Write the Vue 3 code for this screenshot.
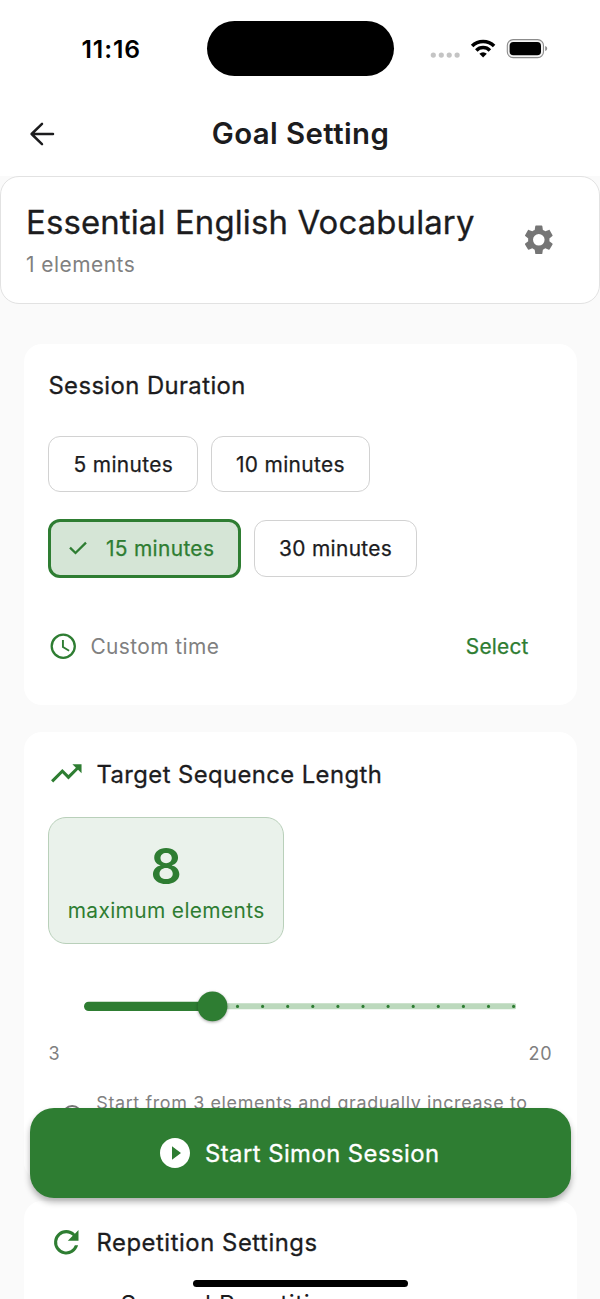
<script setup>
import { ref } from 'vue'

const durations = [[5, 10], [15, 30]]
const selected = ref(15)

const min = 3
const max = 20
const value = ref(8)
const step = 25.1
const ticks = Array.from({ length: max - value.value }, (_, i) => 153.5 + i * step)
</script>

<template>
  <main class="screen">
    <header class="status">
      <span class="time">11:16</span>
      <span class="island"></span>
      <svg class="indicators" width="118" height="24" viewBox="0 0 118 24">
        <g fill="#c4c4c4">
          <circle cx="3.3" cy="18.1" r="2.6" />
          <circle cx="11.3" cy="18.1" r="2.6" />
          <circle cx="19.2" cy="18.1" r="2.6" />
          <circle cx="27.1" cy="18.1" r="2.6" />
        </g>
        <g fill="none" stroke="#000" stroke-width="3.5">
          <path d="M42.1 9.1a15.6 15.6 0 0 1 22 0" />
          <path d="M46.3 13.4a9.6 9.6 0 0 1 13.6 0" />
        </g>
        <path d="M53.1 20.4l-3.7-3.7a5.2 5.2 0 0 1 7.4 0z" />
        <rect x="77.3" y="2.6" width="36.2" height="18" rx="5.8" fill="#f4f4f4" stroke="#8c8c8c" stroke-width="1.1" />
        <rect x="79.6" y="5" width="31.4" height="13.2" rx="3.8" />
        <path d="M115.2 9v5c1.4-.5 2-1.4 2-2.5s-.6-2-2-2.5z" fill="#8c8c8c" />
      </svg>
    </header>

    <nav class="appbar">
      <svg class="back" width="26" height="26" viewBox="0 0 26 26" fill="none" stroke="#1c1c1e" stroke-width="2.5" stroke-linecap="round" stroke-linejoin="round">
        <path d="M24 13H2.6M13 2.9L2.6 13L13 23.1" />
      </svg>
      <h1>Goal Setting</h1>
    </nav>

    <section class="deck">
      <div>
        <h2>Essential English Vocabulary</h2>
        <p>1 elements</p>
      </div>
      <svg class="gear" width="35.6" height="35.6" viewBox="0 0 24 24" fill="#757575">
        <path d="M19.14 12.94c.04-.3.06-.61.06-.94 0-.32-.02-.64-.07-.94l2.03-1.58c.18-.14.23-.41.12-.61l-1.92-3.32c-.12-.22-.37-.29-.59-.22l-2.39.96c-.5-.38-1.03-.7-1.62-.94L14.4 2.81c-.04-.24-.24-.41-.48-.41h-3.84c-.24 0-.43.17-.47.41L9.25 5.35C8.66 5.59 8.12 5.92 7.63 6.29L5.24 5.33c-.22-.08-.47 0-.59.22L2.74 8.87C2.62 9.08 2.66 9.34 2.86 9.48l2.03 1.58C4.84 11.36 4.8 11.69 4.8 12s.02.64.07.94l-2.03 1.58c-.18.14-.23.41-.12.61l1.92 3.32c.12.22.37.29.59.22l2.39-.96c.5.38 1.03.7 1.62.94l.36 2.54c.05.24.24.41.48.41h3.84c.24 0 .44-.17.47-.41l.36-2.54c.59-.24 1.13-.56 1.62-.94l2.39.96c.22.08.47 0 .59-.22l1.92-3.32c.12-.22.07-.47-.12-.61L19.14 12.94zM12 15.9a3.9 3.9 0 1 1 0-7.8 3.9 3.9 0 0 1 0 7.8z" />
      </svg>
    </section>

    <section class="card duration">
      <h3>Session Duration</h3>
      <div v-for="(row, i) in durations" :key="i" class="chips">
        <button v-for="m in row" :key="m" class="chip" :class="{ active: m === selected }" @click="selected = m">
          <svg v-if="m === selected" width="20" height="16" viewBox="0 0 20 16" fill="none" stroke="#2e7d32" stroke-width="2.3">
            <path d="M2 7.7L7.5 13L18 2.6" />
          </svg>
          <span>{{ m }} minutes</span>
        </button>
      </div>
      <div class="custom">
        <svg width="30.5" height="30.5" viewBox="0 0 24 24" fill="#2e7d32">
          <path d="M11.99 2C6.47 2 2 6.48 2 12s4.47 10 9.99 10C17.52 22 22 17.52 22 12S17.52 2 11.99 2zM12 20.2A8.2 8.2 0 1 1 12 3.8a8.2 8.2 0 0 1 0 16.4zM12.5 7H11v6l5.25 3.15.75-1.23-4.5-2.67z" />
        </svg>
        <span class="muted">Custom time</span>
        <span class="select">Select</span>
      </div>
    </section>

    <section class="card target">
      <div class="heading">
        <svg width="36.6" height="36.6" viewBox="0 0 24 24" fill="#2e7d32">
          <path d="M16 6l2.29 2.29-4.88 4.88-4-4L2 16.59 3.41 18l6-6 4 4 6.3-6.29L22 12V6z" />
        </svg>
        <h3>Target Sequence Length</h3>
      </div>
      <div class="badge">
        <strong>{{ value }}</strong>
        <span>maximum elements</span>
      </div>
      <svg class="slider" width="440" height="40" viewBox="0 0 440 40">
        <rect x="120" y="17.3" width="312" height="6" rx="1.5" fill="#bcd9bd" />
        <circle v-for="x in ticks" :key="x" :cx="x" cy="20.4" r="1.55" fill="#2e7d32" />
        <rect x="0" y="15.7" width="130" height="9.4" rx="4.7" fill="#2e7d32" />
        <circle class="thumb" cx="128.5" cy="20.4" r="14.9" fill="#2e7d32" />
      </svg>
      <div class="range">
        <span>{{ min }}</span>
        <span>{{ max }}</span>
      </div>
      <div class="hint">
        <svg width="24.4" height="24.4" viewBox="0 0 24 24" fill="#757575">
          <path d="M11 7h2v2h-2zm0 4h2v6h-2zm1-9a10 10 0 1 0 0 20 10 10 0 0 0 0-20zm0 18a8 8 0 1 1 0-16 8 8 0 0 1 0 16z" />
        </svg>
        <p>Start from 3 elements and gradually increase to {{ value }}</p>
      </div>
    </section>

    <section class="card repetition">
      <div class="heading">
        <svg width="36.6" height="36.6" viewBox="0 0 24 24" fill="#2e7d32">
          <path d="M17.65 6.35A7.96 7.96 0 0 0 12 4a8 8 0 1 0 7.73 10h-2.08A6 6 0 1 1 12 6c1.66 0 3.14.69 4.22 1.78L13 11h7V4z" />
        </svg>
        <h3>Repetition Settings</h3>
      </div>
      <p class="option">Spaced Repetition</p>
    </section>

    <button class="start">
      <svg width="36" height="36" viewBox="0 0 24 24" fill="#fff">
        <path d="M12 2C6.48 2 2 6.48 2 12s4.48 10 10 10 10-4.48 10-10S17.52 2 12 2zm-2 14.5v-9l6 4.5-6 4.5z" />
      </svg>
      <span>Start Simon Session</span>
    </button>
    <div class="home"></div>
  </main>
</template>

<style>
body {
  margin: 0;
  overflow: hidden;
}
</style>

<style scoped>
.screen {
  position: relative;
  width: 600px;
  height: 1299px;
  overflow: hidden;
  background: #fafafa;
  color: #1c1c1e;
  font-family: Inter, "Liberation Sans", sans-serif;
}
h1, h2, h3, p {
  margin: 0;
  font-weight: 400;
}
svg {
  flex: none;
  display: block;
}
button {
  font: inherit;
  color: inherit;
  padding: 0;
  box-sizing: border-box;
}
.status {
  display: flex;
  height: 90px;
  background: #fff;
}
.time {
  width: 125px;
  margin: 34px 0 0 81.5px;
  font-size: 24.7px;
  line-height: 30px;
  font-weight: 600;
  letter-spacing: 0.9px;
  color: #000;
}
.island {
  width: 187.5px;
  height: 54.5px;
  margin-top: 21px;
  border-radius: 28px;
  background: #000;
}
.indicators {
  margin: 37px 0 0 36px;
}
.appbar {
  display: flex;
  align-items: center;
  height: 86px;
  background: #fff;
}
.back {
  margin: 2px 0 0 29px;
}
.appbar h1 {
  width: 491px;
  text-align: center;
  font-size: 29.4px;
  line-height: 40px;
  margin-top: 2px;
  font-weight: 600;
  letter-spacing: 0.4px;
}
.deck {
  box-sizing: border-box;
  display: flex;
  justify-content: space-between;
  height: 128px;
  padding: 24px 42px 0 25px;
  border: 1.5px solid #e2e2e2;
  border-radius: 19px;
  background: #fff;
}
.deck h2 {
  font-size: 32.9px;
  line-height: 42px;
  letter-spacing: 0.14px;
  -webkit-text-stroke: 0.3px currentColor;
}
.deck p {
  font-size: 20.9px;
  line-height: 30px;
  margin-top: 6.5px;
  letter-spacing: 0.5px;
  color: #808080;
}
.gear {
  margin-top: 21px;
}
.card {
  box-sizing: border-box;
  margin: 0 23.5px 0 24px;
  padding: 24.4px;
  border-radius: 18px;
  background: #fff;
}
.card h3 {
  font-size: 23.8px;
  line-height: 34px;
  letter-spacing: 0.43px;
  -webkit-text-stroke: 0.3px currentColor;
}
.duration {
  height: 361px;
  margin-top: 40px;
}
.duration > h3 {
  padding-top: 1px;
}
.chips {
  display: flex;
  align-items: center;
  gap: 12.5px;
  height: 59px;
}
.duration h3 + .chips {
  margin: 31px 0 25.5px;
}
.chip {
  display: flex;
  align-items: center;
  gap: 17.5px;
  height: 56.5px;
  padding: 0 24.2px;
  border: 1.5px solid #d2d2d2;
  border-radius: 12px;
  background: #fff;
  font-size: 20.9px;
  letter-spacing: 0.34px;
  -webkit-text-stroke: 0.25px currentColor;
}
.chip span {
  padding-top: 1px;
}
.chip.active {
  height: 59px;
  padding: 0 24px 0 17px;
  border: 3px solid #2e7d32;
  background: #d5e5d6;
  color: #2e7d32;
}
.custom {
  display: flex;
  align-items: center;
  height: 40px;
  margin-top: 48px;
  font-size: 20.9px;
}
.custom span {
  padding-top: 1.5px;
}
.muted {
  margin-left: 11.5px;
  letter-spacing: 0.42px;
  color: #808080;
}
.select {
  margin: 0 23.5px 0 auto;
  letter-spacing: 0.2px;
  -webkit-text-stroke: 0.25px currentColor;
  color: #2e7d32;
}
.target {
  height: 448px;
  margin-top: 27px;
}
.heading {
  display: flex;
  align-items: center;
  gap: 11.5px;
  height: 36px;
}
.target .heading {
  margin-top: -1px;
}
.heading h3 {
  margin-top: 2px;
}
.target h3 {
  margin-top: 3px;
}
.badge {
  box-sizing: border-box;
  display: flex;
  flex-direction: column;
  align-items: center;
  width: 235.5px;
  height: 127.5px;
  margin-top: 25.5px;
  padding-top: 19.5px;
  border: 1.5px solid #b9d0ba;
  border-radius: 18px;
  background: #eaf2eb;
  color: #2e7d32;
}
.badge strong {
  font-size: 48.9px;
  line-height: 60px;
  font-weight: 600;
}
.badge span {
  font-size: 20.9px;
  line-height: 28px;
  letter-spacing: 0.36px;
}
.slider {
  margin: 41.5px 0 0 35.5px;
}
.thumb {
  filter: drop-shadow(0 1.5px 1.5px rgba(0, 0, 0, 0.35));
}
.range {
  display: flex;
  justify-content: space-between;
  margin-top: 15px;
  font-size: 18px;
  line-height: 26px;
  letter-spacing: 0.6px;
  color: #808080;
}
.hint {
  display: flex;
  align-items: center;
  gap: 12px;
  margin: 23px 0 0 11.5px;
  font-size: 17.9px;
  line-height: 26px;
  letter-spacing: 0.64px;
  color: #808080;
}
.hint svg {
  margin-top: -2px;
}
.hint p {
  width: 440px;
}
.repetition {
  height: 300px;
  margin-top: 20.5px;
}
.repetition .heading {
  margin-top: -1px;
}
.repetition h3 {
  letter-spacing: 0.56px;
}
.option {
  margin: 27.5px 0 0 72px;
  font-size: 24.4px;
  line-height: 34px;
  letter-spacing: 0.6px;
}
.start {
  position: absolute;
  left: 30px;
  top: 1107.5px;
  display: flex;
  align-items: center;
  justify-content: center;
  gap: 12px;
  width: 540.5px;
  height: 90.5px;
  padding-right: 4px;
  border: 0;
  border-radius: 24px;
  background: #2e7d32;
  box-shadow: 0 4px 6px rgba(0, 0, 0, 0.3);
  color: #fff;
  font-size: 23.8px;
  letter-spacing: 0.47px;
  -webkit-text-stroke: 0.3px currentColor;
}
.start span {
  padding-top: 1.5px;
}
.home {
  position: absolute;
  left: 193px;
  top: 1279.5px;
  width: 215px;
  height: 7.5px;
  border-radius: 4px;
  background: #000;
}
</style>
